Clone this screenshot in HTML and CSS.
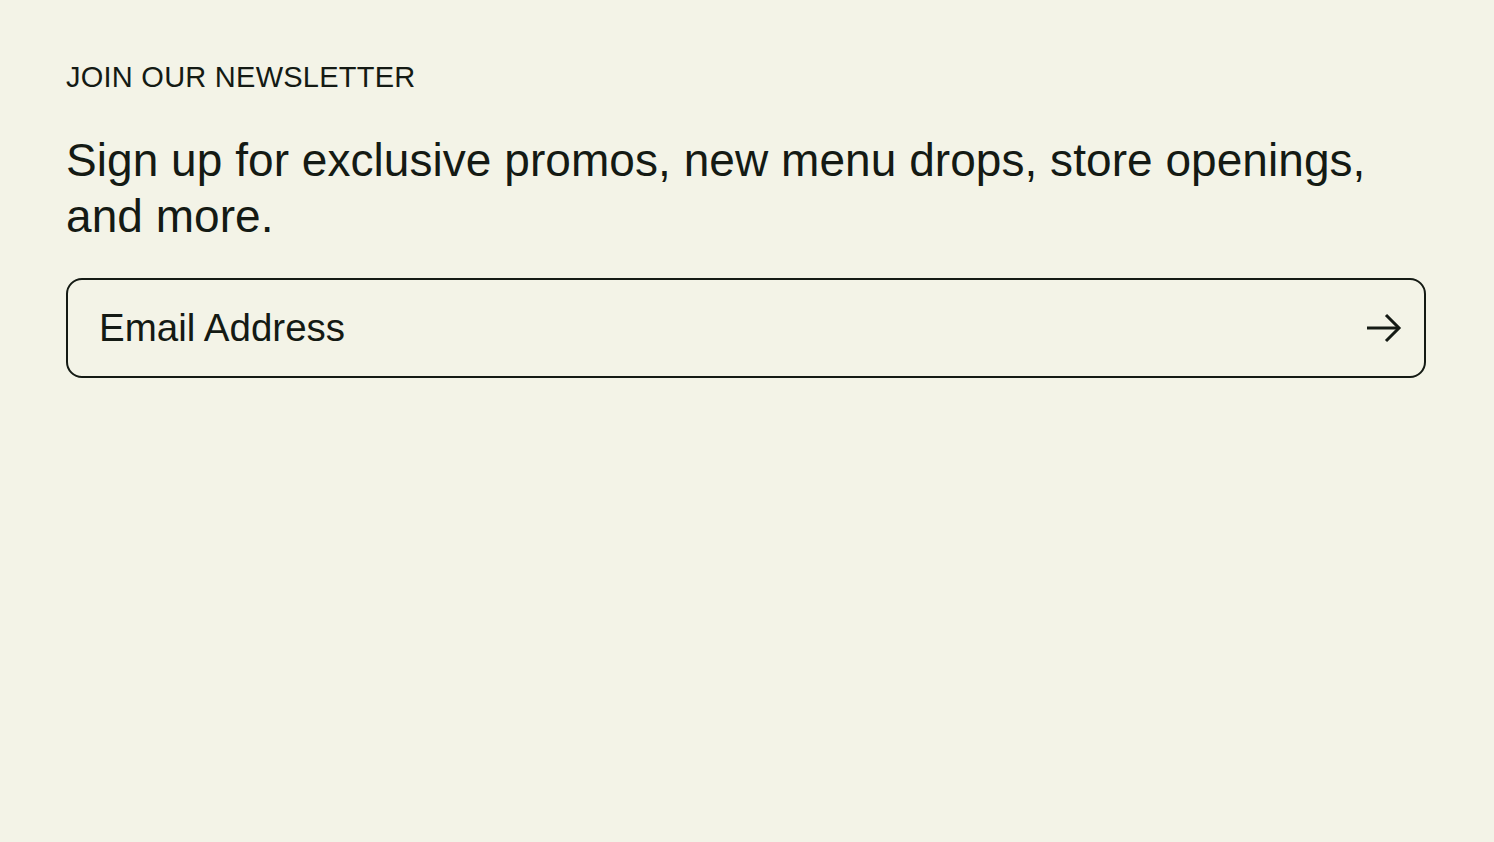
FILE: index.html
```html
<!DOCTYPE html>
<html lang="en">
<head>
<meta charset="utf-8">
<title>Newsletter</title>
<link rel="stylesheet" href="styles.css">
</head>
<body>
<section class="newsletter">
  <h2 class="eyebrow">JOIN OUR NEWSLETTER</h2>
  <p class="lead">Sign up for exclusive promos, new menu drops, store openings, and more.</p>
  <form class="signup">
    <input class="email" type="email" placeholder="Email Address">
    <button class="submit" type="button" aria-label="Submit">
      <svg width="36" height="30" viewBox="0 0 36 30" fill="none" stroke="#141a14" stroke-width="3">
        <path d="M1 15H33"/>
        <path d="M20 2L33 15L20 28"/>
      </svg>
    </button>
  </form>
</section>
</body>
</html>
```
FILE: styles.css
```css
html, body {
  margin: 0;
  padding: 0;
  background: #f3f3e7;
  color: #141a14;
  font-family: "Liberation Sans", Arial, sans-serif;
}
.newsletter {
  padding: 60px 68px 0 66px;
  display: flex;
  flex-direction: column;
}
.eyebrow {
  margin: 0;
  font-size: 29px;
  font-weight: 400;
  line-height: 34px;
  letter-spacing: 0.25px;
}
.lead {
  margin: 38px 0 0;
  font-size: 46px;
  line-height: 56px;
  font-weight: 400;
  letter-spacing: 0.05px;
}
.signup {
  margin-top: 34px;
  display: flex;
  align-items: center;
  height: 100px;
  box-sizing: border-box;
  border: 2px solid #141a14;
  border-radius: 16px;
  padding: 0 22px 0 31px;
}
.email {
  flex: 1;
  border: 0;
  background: transparent;
  font-family: inherit;
  font-size: 38.5px;
  color: #141a14;
  outline: none;
  padding: 0;
}
.email::placeholder {
  color: #141a14;
  opacity: 1;
}
.submit {
  border: 0;
  background: transparent;
  padding: 0;
  display: flex;
  cursor: pointer;
}
```
